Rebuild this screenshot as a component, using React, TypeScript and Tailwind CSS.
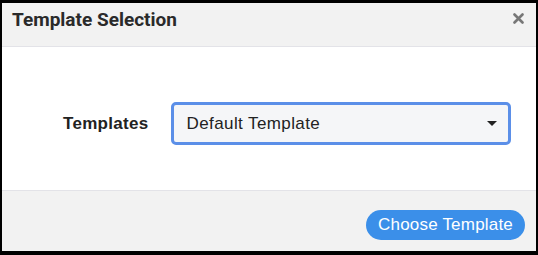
export default function App() {
  return (
    <div className="h-[255px] w-[538px] bg-black pt-[3px] pr-[2px] pb-[4px] pl-[2px]">
      <div className="flex h-full flex-col bg-white">
        {/* header */}
        <div className="flex h-[44px] items-start justify-between border-b border-[#e3e3e8] bg-[#f2f2f2] pl-[10px] pr-[12px] pt-[5px]">
          <h1 className="font-['Roboto',sans-serif] text-[19px] font-bold leading-[24px] text-[#2a2a2a]">
            Template Selection
          </h1>
          <svg width="11" height="11" viewBox="0 0 11 11" className="mt-[5px] text-[#777]">
            <path d="M1.5 1.5l8 8M9.5 1.5l-8 8" stroke="currentColor" strokeWidth="2.6" strokeLinecap="round" />
          </svg>
        </div>

        {/* body */}
        <div className="flex h-[144px] items-center border-b border-[#e3e3e8] pl-[61px] pt-[10px] font-['Liberation_Sans',Arial,sans-serif]">
          <label className="text-[17px] font-bold tracking-[0.3px] text-[#222]">Templates</label>
          <div className="ml-[22px] flex h-[43px] w-[340px] items-center justify-between rounded-[5px] border-[3px] border-[#5b8fe8] bg-[#f5f6f8] pl-[13px] pr-[11px]">
            <span className="text-[17px] tracking-[0.4px] text-[#222]">Default Template</span>
            <svg width="10" height="5" viewBox="0 0 10 5" className="text-[#222]">
              <path d="M0 0h10L5 5z" fill="currentColor" />
            </svg>
          </div>
        </div>

        {/* footer */}
        <div className="flex flex-1 justify-end bg-[#f2f2f2] pr-[11px] pt-[19px]">
          <button className="h-[30px] w-[159px] rounded-full bg-[#3b8fe9] font-['Liberation_Sans',Arial,sans-serif] text-[17px] tracking-[0.2px] text-white">
            Choose Template
          </button>
        </div>
      </div>
    </div>
  );
}
